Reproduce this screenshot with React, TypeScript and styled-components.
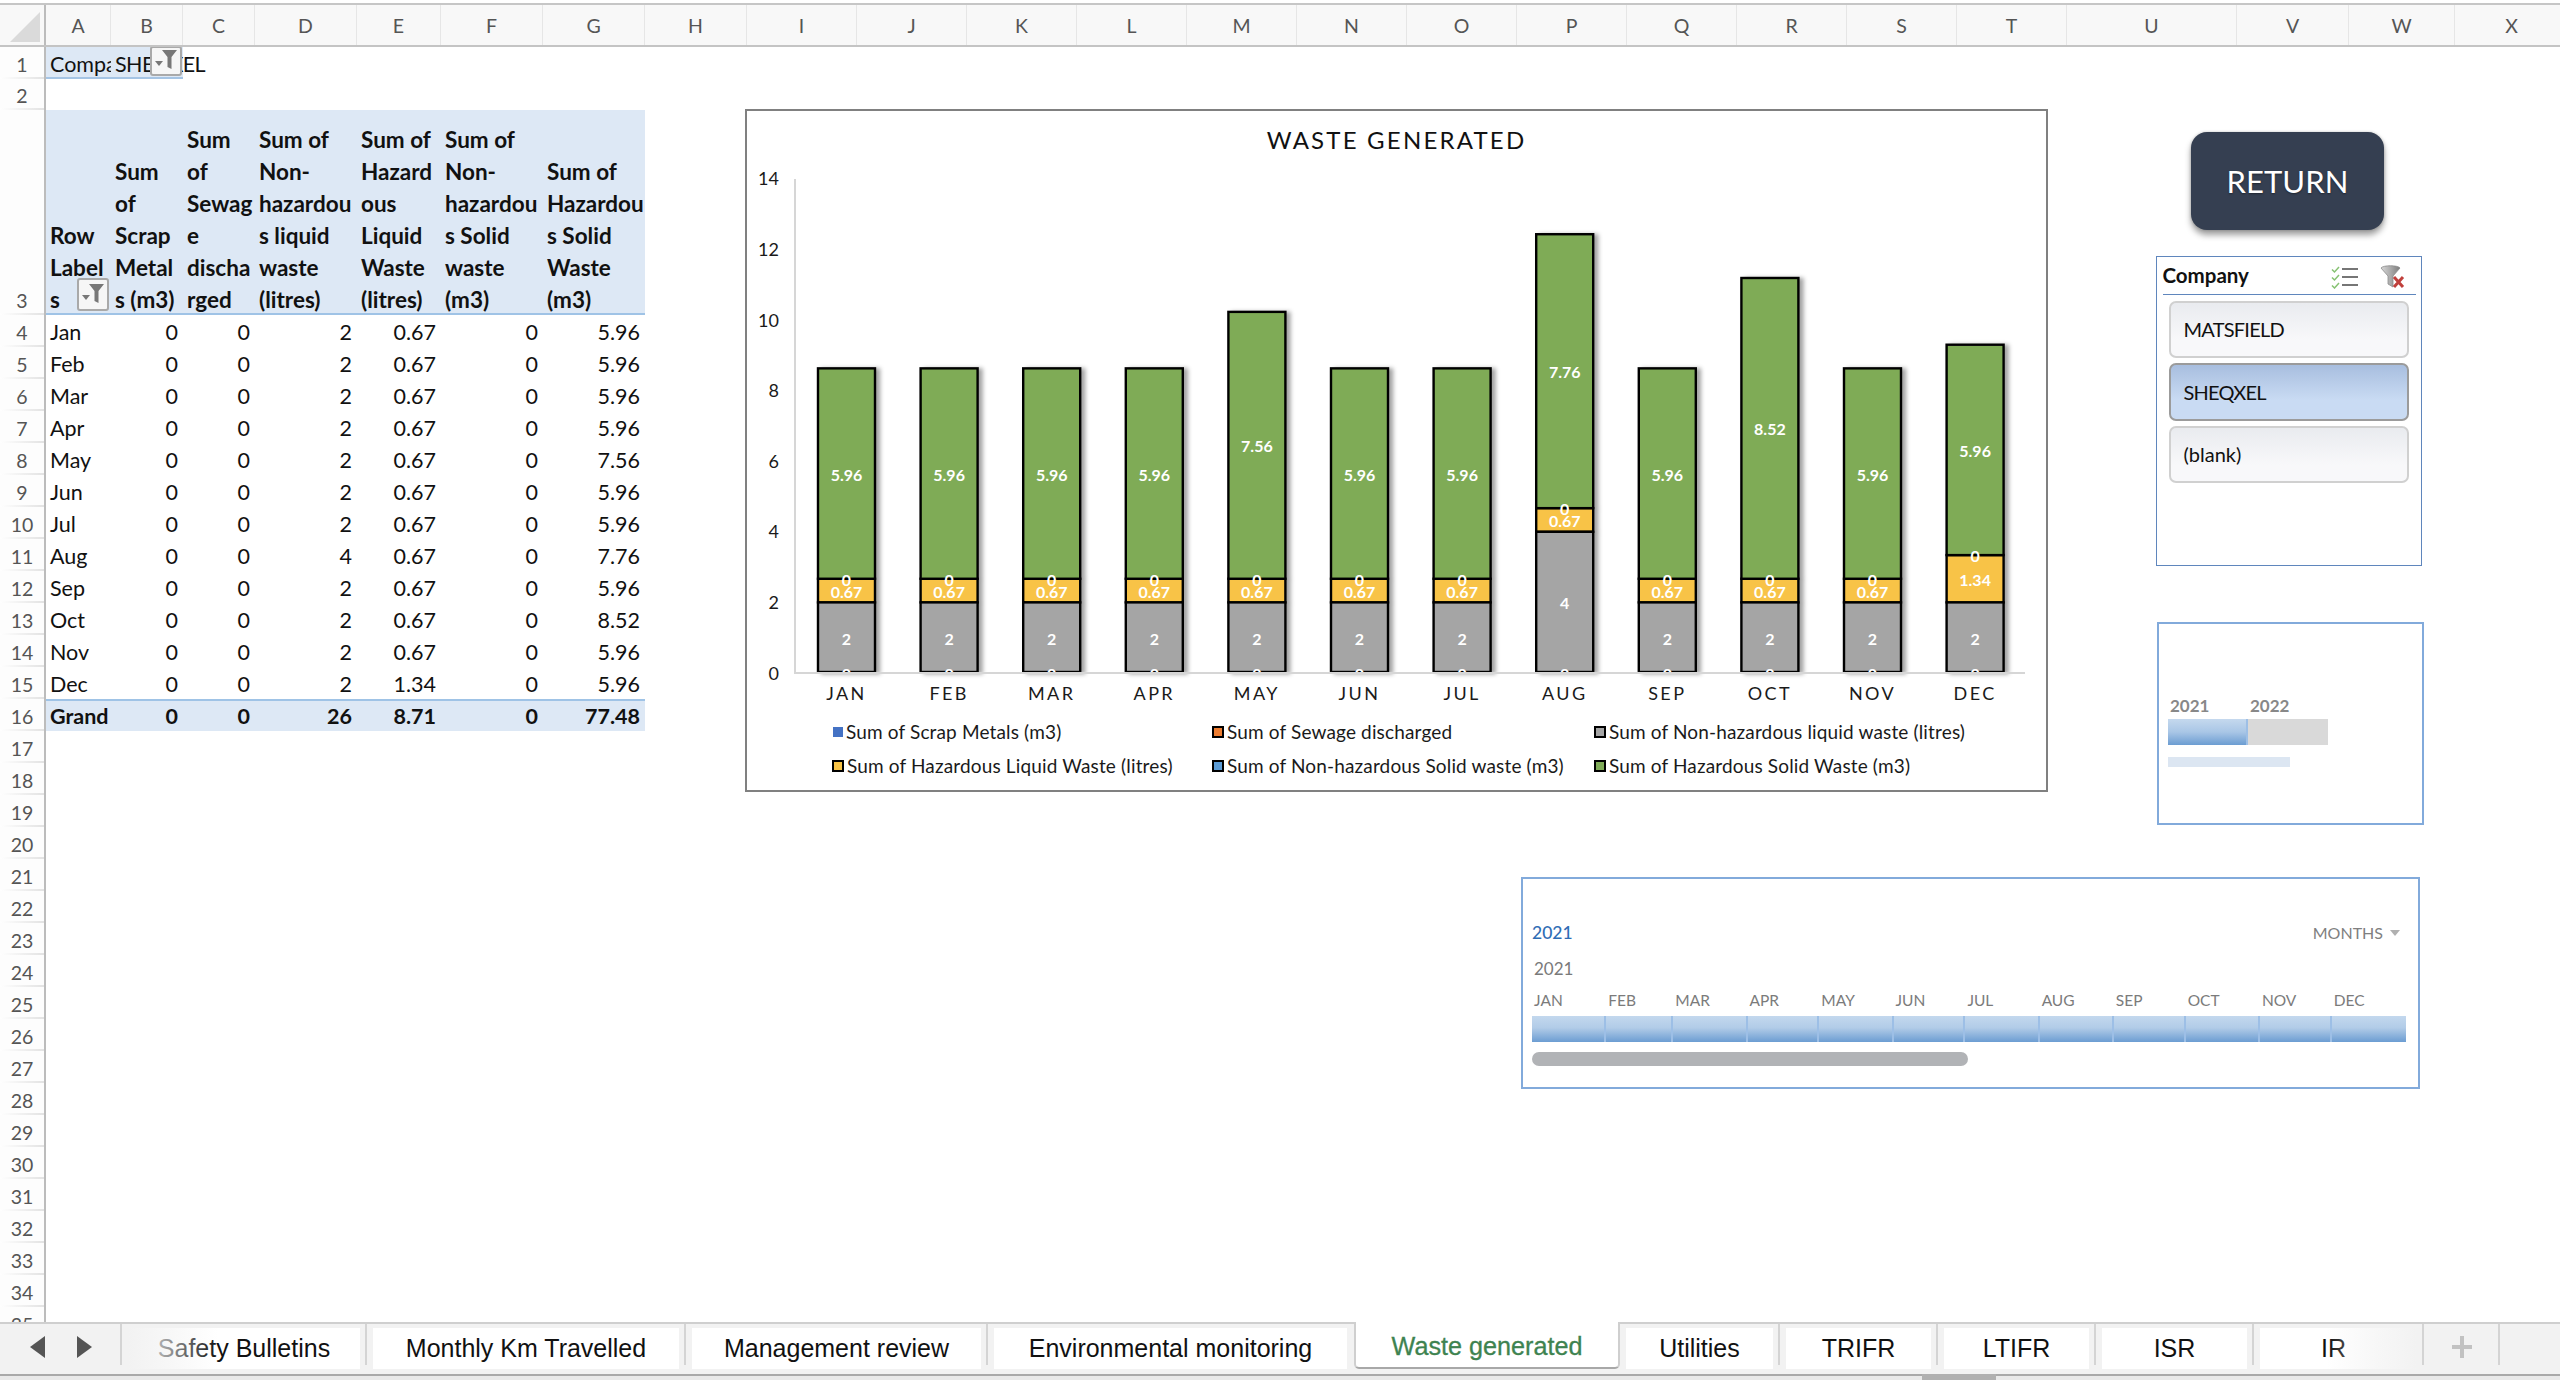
import React from "react";
import styled, { createGlobalStyle } from "styled-components";

const Global = createGlobalStyle`
  html, body { margin: 0; padding: 0; background: #fff; overflow: hidden; }
  #root { width: 2560px; height: 1380px; }
  * { box-sizing: border-box; }
`;

const BODY = `"Lato", "Open Sans", sans-serif`;
const TAB = `"Liberation Sans", Arial, sans-serif`;

const Page = styled.div`
  width: 2560px; height: 1380px; display: flex; flex-direction: column;
  font-family: ${BODY}; color: #111; overflow: hidden;
`;

/* ---------- column header ---------- */
const ColumnBar = styled.div`
  flex: none; height: 44px; margin-top: 3px; border-top: 2px solid #c6c6c6; border-bottom: 2px solid #c4c4c4;
  background: #f8f8f8; display: grid; overflow: hidden;
  grid-template-columns: 46px 65px 72px 72px 102px 84px 102px 102px 102px repeat(12, 110px) 170px 112px 106px 114px;
`;
const Corner = styled.div`
  border-right: 2px solid #bcbcbc; display: flex; align-items: flex-end; justify-content: flex-end; padding: 0 4px 3px 0;
`;
const ColName = styled.div`
  display: flex; align-items: center; justify-content: center; font-size: 19.5px; color: #555;
  border-right: 1px solid #e6e6e6;
`;

/* ---------- sheet ---------- */
const Sheet = styled.div`
  flex: 1; min-height: 0; display: flex; overflow: hidden;
`;
const RowBar = styled.div`
  flex: none; width: 46px; border-right: 2px solid #bcbcbc; background: #fdfdfd; overflow: hidden;
`;
const RowName = styled.div<{ $h: number }>`
  height: ${(p) => p.$h}px; display: flex; align-items: flex-end; justify-content: center;
  font-size: 19.5px; color: #555; padding-bottom: 0; line-height: 24px; flex: none;
  border-bottom: 2px solid; border-image: linear-gradient(90deg, #ffffff, #e2e2e2) 1;
`;
const Canvas = styled.div`
  flex: 1; display: flex; min-width: 0; align-items: flex-start;
`;

/* ---------- pivot ---------- */
const Pivot = styled.div`
  flex: none; width: 599px; display: grid;
  grid-template-columns: 65px 72px 72px 102px 84px 102px 102px;
  font-size: 21.5px; line-height: 32px;
`;
const FilterCell = styled.div<{ $clip?: boolean }>`
  grid-column: span 1; height: 32px; background: #dde8f5; border-bottom: 2px solid #a5c4e4;
  padding: 1px 0 0 4px; position: relative; white-space: nowrap; letter-spacing: ${(p) => (p.$clip ? 0 : -0.6)}px;
  overflow: ${(p) => (p.$clip ? "hidden" : "visible")}; z-index: ${(p) => (p.$clip ? 0 : 1)};
`;
const Gap = styled.div`
  grid-column: 1 / -1; height: 31px;
`;
const HeadCell = styled.div`
  height: 205px; background: #dde8f5; border-bottom: 2px solid #9fc3e6; padding: 0 0 0 4px;
  display: flex; align-items: flex-end; font-weight: 700; position: relative;
  font-size: 22.5px;
`;
const HeadText = styled.div`
  white-space: pre; margin-bottom: -3px;
`;
const NameCell = styled.div`
  height: 32px; padding: 1px 0 0 4px; white-space: nowrap; overflow: hidden;
`;
const NumCell = styled.div`
  height: 32px; padding: 1px 5px 0 0; text-align: right;
`;
const GrandName = styled(NameCell)`
  background: #dde8f5; font-weight: 700; border-top: 2px solid #9fc3e6; line-height: 30px; padding-top: 0;
`;
const GrandNum = styled(NumCell)`
  background: #dde8f5; font-weight: 700; border-top: 2px solid #9fc3e6; line-height: 30px; padding-top: 0;
`;
const FilterButton = styled.div<{ $small?: boolean }>`
  position: absolute; width: 32px; height: ${(p) => (p.$small ? 30 : 33)}px;
  right: ${(p) => (p.$small ? 1 : 2)}px; bottom: ${(p) => (p.$small ? 1 : 2)}px;
  background: #f6f6f6; border: 2px solid #a9a9a9; border-radius: 3px; display: flex; align-items: center; justify-content: center;
`;

/* ---------- right area ---------- */
const Floating = styled.div`
  flex: none; margin-left: 100px; margin-top: 62px; display: flex; flex-direction: column; align-items: flex-start;
`;
const TopRow = styled.div`
  display: flex; align-items: flex-start;
`;
const Chart = styled.div`
  flex: none; width: 1303px; height: 683px; border: 2px solid #808080; background: #fff;
  display: flex; flex-direction: column; align-items: stretch;
`;
const ChartTitle = styled.div`
  height: 49px; display: flex; align-items: center; justify-content: center; padding-top: 9px;
  font-size: 24px; font-weight: 400; letter-spacing: 2.2px; color: #111; line-height: 30px;
`;
const Plot = styled.svg`
  display: block; width: 1299px; height: 550px; flex: none;
`;
const AxisText = styled.text`
  font-family: ${BODY}; font-size: 18px; fill: #1a1a1a; text-anchor: end;
`;
const MonthText = styled.text`
  font-family: ${BODY}; font-size: 18px; fill: #1a1a1a; text-anchor: middle; letter-spacing: 2.4px;
`;
const DataText = styled.text`
  font-family: ${BODY}; font-size: 16px; font-weight: 700; fill: #fff; text-anchor: middle;
`;
const Legend = styled.div`
  display: grid; grid-template-columns: 380px 382px auto; grid-auto-rows: 34px; justify-content: start;
  padding: 0 0 0 85px; margin-top: 5px; font-size: 19px; letter-spacing: 0.15px; color: #1a1a1a;
`;
const LegendItem = styled.div`
  display: flex; align-items: center; gap: 3px; white-space: nowrap; line-height: 24px;
`;
const Swatch = styled.span<{ $c: string; $plain?: boolean }>`
  width: ${(p) => (p.$plain ? 10 : 12)}px; height: ${(p) => (p.$plain ? 10 : 12)}px; flex: none; background: ${(p) => p.$c};
  border: ${(p) => (p.$plain ? "none" : "2px solid #000")}; margin-left: ${(p) => (p.$plain ? 1 : 0)}px;
`;

const Side = styled.div`
  flex: none; width: 267px; margin-left: 108px; display: flex; flex-direction: column; align-items: flex-start;
`;
const ReturnButton = styled.div`
  width: 193px; height: 98px; margin: 23px 0 0 35px; border-radius: 16px; background: #353f51; color: #fff;
  display: flex; align-items: center; justify-content: center; font-size: 31px; letter-spacing: 0.1px;
  box-shadow: 0 5px 6px rgba(0,0,0,0.38), 0 0 3px rgba(0,0,0,0.2); text-shadow: 0 1px 2px rgba(0,0,0,0.4);
`;
const Slicer = styled.div`
  width: 266px; height: 310px; margin-top: 26px; border: 1.5px solid #5f86bd; padding: 0 5.5px; background: #fff;
`;
const SlicerHead = styled.div`
  height: 37.5px; display: flex; align-items: center; border-bottom: 1.5px solid #5f86bd; position: relative;
  font-size: 20.5px; font-weight: 700; padding-left: 0;
`;
const SlicerIcons = styled.div`
  margin-left: auto; margin-right: 10px; display: flex; gap: 22px; align-items: center; padding-top: 4px;
`;
const SlicerList = styled.div`
  margin: 6px 7px 0 6px; display: flex; flex-direction: column; gap: 5px;
`;
const SlicerItem = styled.div<{ $on?: boolean; $caps?: boolean }>`
  height: 57.5px; border-radius: 7px; padding-left: 13px; display: flex; align-items: center;
  font-size: 20px; color: #111; letter-spacing: ${(p) => (p.$caps ? -0.75 : 0)}px;
  border: 2px solid ${(p) => (p.$on ? "#9b9b9b" : "#d0d0d0")};
  background: ${(p) => p.$on ? "linear-gradient(180deg,#a8bedf 0%,#c9dbf3 65%,#c9dbf3 100%)" : "linear-gradient(180deg,#e9ebef 0%,#f8f8fa 70%,#f8f8fa 100%)"};
`;

const YearBox = styled.div`
  width: 267px; height: 203px; margin-top: 56px; margin-left: 1px; border: 2px solid #82aadb;
  padding: 70px 0 0 9px; background: #fff;
`;
const YearLabels = styled.div`
  display: grid; grid-template-columns: 80px 80px; font-size: 17px; font-weight: 700; color: #888888; line-height: 24px; height: 25px; padding-left: 2px;
`;
const YearTrack = styled.div`
  width: 160px; height: 26px; background: #d9d9d9; display: flex;
`;
const YearFill = styled.div`
  width: 80px; height: 26px; border-right: 2px solid #9dbfe6;
  background: linear-gradient(180deg,#c5d9ee 0%,#a9c6e6 50%,#6c9dd2 100%);
`;
const YearScroll = styled.div`
  width: 122px; height: 10px; background: #dce6f2; margin-top: 12px;
`;

const Timeline = styled.div`
  width: 899px; height: 212px; margin: 52px 0 0 776px; border: 2px solid #82aadb; background: #fff;
  padding: 41px 13px 0 9px; display: flex; flex-direction: column;
`;
const TimelineTop = styled.div`
  display: flex; justify-content: space-between; align-items: center; height: 24px; padding-right: 5px;
`;
const BlueYear = styled.div`
  font-size: 17.5px; color: #2f6db5; font-weight: 500;
`;
const Months = styled.div`
  font-size: 16px; color: #808080; display: flex; align-items: center; gap: 7px;
`;
const Caret = styled.span`
  width: 0; height: 0; border-left: 5px solid transparent; border-right: 5px solid transparent; border-top: 6px solid #b0b0b0; margin-top: 2px;
`;
const GrayYear = styled.div`
  font-size: 17px; color: #7a7a7a; margin-top: 13px; padding-left: 2px; line-height: 24px;
`;
const MonthGrid = styled.div`
  display: grid; width: 874px;
  grid-template-columns: 31fr 28fr 31fr 30fr 31fr 30fr 31fr 31fr 30fr 31fr 30fr 31fr;
`;
const MonthName = styled.div`
  font-size: 15.5px; color: #7b7b7b; padding-left: 2px; line-height: 22px; margin-top: 8px; height: 27px;
`;
const MonthBar = styled.div`
  height: 26px; border-right: 2px solid #9dbfe6;
  background: linear-gradient(180deg,#c3d8ee 0%,#b2cce8 45%,#6c9dd2 100%);
  &:last-child { border-right: none; }
`;
const TimelineScroll = styled.div`
  width: 436px; height: 14px; border-radius: 7px; background: #b1b3b6; margin-top: 10px;
`;

/* ---------- tabs ---------- */
const TabBar = styled.div`
  flex: none; height: 52px; background: #f2f2f2; border-top: 2px solid #cfcfcf; display: flex; align-items: stretch; position: relative; z-index: 2;
`;
const TabNav = styled.div`
  flex: none; width: 122px; display: flex; align-items: center; padding-bottom: 4px; justify-content: center; gap: 30px;
  position: relative;
`;
const NavLine = styled.span`
  position: absolute; right: 0; top: 0; height: 41px; width: 2px; background: #d4d4d4;
`;
const Slot = styled.div<{ $w: number; $line?: boolean }>`
  flex: none; width: ${(p) => p.$w}px; padding: 4px 7px 5px 6px; position: relative;
  &::after {
    content: ""; display: ${(p) => (p.$line ? "block" : "none")}; position: absolute; right: 0; top: 0; height: 41px; width: 2px; background: #d4d4d4;
  }
`;
const Tab = styled.div<{ $fade?: "left" | "right" }>`
  height: 100%; background: #fff; display: flex; align-items: center; justify-content: center;
  font-family: ${TAB}; font-size: 25px; color: #111; white-space: nowrap; position: relative;
  padding: 0 ${(p) => (p.$fade === "right" ? 10 : 0)}px 1px 0;
  &::before {
    content: ""; display: ${(p) => (p.$fade ? "block" : "none")}; position: absolute; top: 0; bottom: 0;
    width: 90px; ${(p) => (p.$fade === "left" ? "left: 0;" : "right: 0;")}
    background: linear-gradient(${(p) => (p.$fade === "left" ? "90deg" : "270deg")}, #f2f2f2 0%, rgba(242,242,242,0.6) 45%, rgba(242,242,242,0) 100%);
  }
`;
const ActiveTab = styled.div`
  flex: none; width: 266px; margin: -2px 0 5px 0; height: 47px; background: #fff; border: 2px solid #cfcfcf; border-top: none;
  border-bottom-color: #a8a8a8; border-radius: 0 0 5px 5px; display: flex; align-items: center; justify-content: center;
  font-family: ${TAB}; font-size: 25.2px; font-weight: 400; color: #3e8350; -webkit-text-stroke: 0.3px #3e8350; padding-top: 3px;
`;
const PlusSlot = styled.div`
  flex: none; width: 76px; display: flex; align-items: center; justify-content: center; padding-bottom: 5px; position: relative;
  &::after { content: ""; position: absolute; right: 0; top: 0; height: 41px; width: 2px; background: #d4d4d4; }
`;
const BottomStrip = styled.div`
  flex: none; height: 6px; background: #e9e9e9; border-top: 2px solid #a9a9a9; position: relative; z-index: 2;
`;
const StripThumb = styled.div`
  width: 74px; height: 6px; margin: -2px 0 0 1922px; background: #b0b0b0;
`;

/* ---------- data ---------- */
const COLS = "A B C D E F G H I J K L M N O P Q R S T U V W X".split(" ");
const HEADS = [
  "Row\nLabel\ns",
  "Sum\nof\nScrap\nMetal\ns (m3)",
  "Sum\nof\nSewag\ne\ndischa\nrged",
  "Sum of\nNon-\nhazardou\ns liquid\nwaste\n(litres)",
  "Sum of\nHazard\nous\nLiquid\nWaste\n(litres)",
  "Sum of\nNon-\nhazardou\ns Solid\nwaste\n(m3)",
  "Sum of\nHazardou\ns Solid\nWaste\n(m3)",
];
const MONTHS = ["Jan","Feb","Mar","Apr","May","Jun","Jul","Aug","Sep","Oct","Nov","Dec"];
const LIQUID = [2,2,2,2,2,2,2,4,2,2,2,2];
const HAZ = [0.67,0.67,0.67,0.67,0.67,0.67,0.67,0.67,0.67,0.67,0.67,1.34];
const SOLID = [5.96,5.96,5.96,5.96,7.56,5.96,5.96,7.76,5.96,8.52,5.96,5.96];

const ROW_HEIGHTS = [32, 31, 205, ...Array(32).fill(32)];

const Y0 = 673;
const UNIT = 35.3;
const y = (v: number) => Y0 - v * UNIT;
const barX = (i: number) => 818 + i * 102.6;

const LEGEND: { c: string; t: string; plain?: boolean }[] = [
  { c: "#4472c4", t: "Sum of Scrap Metals (m3)", plain: true },
  { c: "#ed7d31", t: "Sum of Sewage discharged" },
  { c: "#a5a5a5", t: "Sum of Non-hazardous liquid waste (litres)" },
  { c: "#f8c346", t: "Sum of Hazardous Liquid Waste (litres)" },
  { c: "#5b9bd5", t: "Sum of Non-hazardous Solid waste (m3)" },
  { c: "#7fab57", t: "Sum of Hazardous Solid Waste (m3)" },
];
const TABS: { n: string; w: number; line?: boolean; fade?: "left" | "right" }[] = [
  { n: "Safety Bulletins", w: 245, line: true, fade: "left" },
  { n: "Monthly Km Travelled", w: 319, line: true },
  { n: "Management review", w: 302, line: true },
  { n: "Environmental monitoring", w: 366 },
];
const TABS2: { n: string; w: number; line?: boolean; fade?: "left" | "right" }[] = [
  { n: "Utilities", w: 160, line: true },
  { n: "TRIFR", w: 158, line: true },
  { n: "LTIFR", w: 158, line: true },
  { n: "ISR", w: 158, line: true },
  { n: "IR", w: 170, line: true, fade: "right" },
];

const FunnelButtonIcon = () => (
  <svg width="28" height="26" viewBox="0 0 28 26">
    <path d="M3 13h8l-4 5z" fill="#777" />
    <path d="M10 2h15l-5.5 7v12l-4-2V9z" fill="#777" />
  </svg>
);
const ChecklistIcon = () => (
  <svg width="27" height="23" viewBox="0 0 27 23">
    <g fill="none" stroke="#86c272" strokeWidth="1.5">
      <path d="M1 3.5l2.5 2.5L8 1" />
      <path d="M1 11.5l2.5 2.5L8 9" />
      <path d="M1 19.5l2.5 2.5L8 17" />
    </g>
    <g stroke="#4a4a4a" strokeWidth="1.4">
      <path d="M11 3h16M11 11h16M11 19h16" />
    </g>
  </svg>
);
const ClearFilterIcon = () => (
  <svg width="26" height="24" viewBox="0 0 26 24">
    <defs>
      <linearGradient id="fnl" x1="0" x2="1" y1="0" y2="0">
        <stop offset="0" stopColor="#d8d8d8" />
        <stop offset="1" stopColor="#7d7d7d" />
      </linearGradient>
    </defs>
    <path d="M1 3c2-3 17-3 19 0l-7 8v11l-5-3v-8z" fill="url(#fnl)" stroke="#8a8a8a" strokeWidth="0.8" />
    <path d="M14 12l9 10M23 12l-9 10" stroke="#c0403c" strokeWidth="3" />
  </svg>
);
const NavArrow = ({ right }: { right?: boolean }) => (
  <svg width="17" height="22" viewBox="0 0 17 22">
    <path d={right ? "M1 0l15 11L1 22z" : "M16 0L1 11l15 11z"} fill="#555" />
  </svg>
);
const PlusIcon = () => (
  <svg width="20" height="22" viewBox="0 0 20 22">
    <path d="M8 0h4v9h8v4h-8v9H8v-9H0V9h8z" fill="#c2c2c2" />
  </svg>
);

export default function App() {
  return (
    <Page>
      <Global />
      <ColumnBar>
        <Corner>
          <svg width="30" height="30" viewBox="0 0 30 30"><path d="M30 0v30H0z" fill="#dadada" /></svg>
        </Corner>
        {COLS.map((c) => <ColName key={c}>{c}</ColName>)}
      </ColumnBar>
      <Sheet>
        <RowBar>
          {ROW_HEIGHTS.map((h, i) => <RowName key={i} $h={h}>{i + 1}</RowName>)}
        </RowBar>
        <Canvas>
          <Pivot>
            <FilterCell $clip>Company</FilterCell>
            <FilterCell>
              SHEQXEL
              <FilterButton $small><FunnelButtonIcon /></FilterButton>
            </FilterCell>
            <NameCell /><NameCell /><NameCell /><NameCell /><NameCell />
            <Gap />
            {HEADS.map((h, i) => (
              <HeadCell key={i}>
                <HeadText>{h}</HeadText>
                {i === 0 && <FilterButton><FunnelButtonIcon /></FilterButton>}
              </HeadCell>
            ))}
            {MONTHS.map((m, i) => (
              <React.Fragment key={m}>
                <NameCell>{m}</NameCell>
                <NumCell>0</NumCell>
                <NumCell>0</NumCell>
                <NumCell>{LIQUID[i]}</NumCell>
                <NumCell>{HAZ[i]}</NumCell>
                <NumCell>0</NumCell>
                <NumCell>{SOLID[i]}</NumCell>
              </React.Fragment>
            ))}
            <GrandName>Grand</GrandName>
            <GrandNum>0</GrandNum>
            <GrandNum>0</GrandNum>
            <GrandNum>26</GrandNum>
            <GrandNum>8.71</GrandNum>
            <GrandNum>0</GrandNum>
            <GrandNum>77.48</GrandNum>
          </Pivot>
          <Floating>
            <TopRow>
              <Chart>
                <ChartTitle>WASTE GENERATED</ChartTitle>
                <Plot viewBox="747 160 1299 550">
                  <defs>
                    <filter id="barShadow" x="-20%" y="-5%" width="150%" height="110%">
                      <feDropShadow dx="4" dy="1" stdDeviation="2.2" floodColor="#000" floodOpacity="0.36" />
                    </filter>
                    <clipPath id="plotClip"><rect x="747" y="160" width="1299" height="512" /></clipPath>
                  </defs>
                  <path d="M795 179V673H2025" fill="none" stroke="#d6d6d6" strokeWidth="2" />
                  {[0,2,4,6,8,10,12,14].map((v) => (
                    <AxisText key={v} x={779} y={y(v) + 6.5}>{v}</AxisText>
                  ))}
                  {MONTHS.map((m, i) => {
                    const x = barX(i);
                    const a = LIQUID[i], b = a + HAZ[i], c = b + SOLID[i];
                    return (
                      <g key={m} filter="url(#barShadow)">
                        <rect x={x} y={y(b)} width={57} height={y(a) - y(b)} fill="#f8c346" stroke="#000" strokeWidth="2.4" />
                        <rect x={x} y={y(a)} width={57} height={y(0) - y(a) - 1} fill="#a5a5a5" stroke="#000" strokeWidth="2.4" />
                        <rect x={x} y={y(c)} width={57} height={y(b) - y(c)} fill="#7fab57" stroke="#000" strokeWidth="2.4" />
                      </g>
                    );
                  })}
                  <path d="M795 673H2025" fill="none" stroke="#d6d6d6" strokeWidth="2" />
                  {MONTHS.map((m, i) => {
                    const x = barX(i) + 28.5;
                    const a = LIQUID[i], b = a + HAZ[i], c = b + SOLID[i];
                    return (
                      <g key={m}>
                        <DataText x={x} y={y(a / 2) + 7}>{a}</DataText>
                        <DataText x={x} y={y(a + HAZ[i] / 2) + 7}>{HAZ[i]}</DataText>
                        <DataText x={x} y={y((b + c) / 2) + 7}>{SOLID[i]}</DataText>
                        <DataText x={x} y={y(b) + 7}>0</DataText>
                        <g clipPath="url(#plotClip)"><DataText x={x} y={680}>0</DataText></g>
                        <MonthText x={x} y={700}>{m.toUpperCase()}</MonthText>
                      </g>
                    );
                  })}
                </Plot>
                <Legend>
                  {LEGEND.map((l) => (
                    <LegendItem key={l.t}>
                      <Swatch $c={l.c} $plain={l.plain} />
                      {l.t}
                    </LegendItem>
                  ))}
                </Legend>
              </Chart>
              <Side>
                <ReturnButton>RETURN</ReturnButton>
                <Slicer>
                  <SlicerHead>
                    Company
                    <SlicerIcons>
                      <ChecklistIcon />
                      <ClearFilterIcon />
                    </SlicerIcons>
                  </SlicerHead>
                  <SlicerList>
                    <SlicerItem $caps>MATSFIELD</SlicerItem>
                    <SlicerItem $on $caps>SHEQXEL</SlicerItem>
                    <SlicerItem>(blank)</SlicerItem>
                  </SlicerList>
                </Slicer>
                <YearBox>
                  <YearLabels><span>2021</span><span>2022</span></YearLabels>
                  <YearTrack><YearFill /></YearTrack>
                  <YearScroll />
                </YearBox>
              </Side>
            </TopRow>
            <Timeline>
              <TimelineTop>
                <BlueYear>2021</BlueYear>
                <Months>MONTHS <Caret /></Months>
              </TimelineTop>
              <GrayYear>2021</GrayYear>
              <MonthGrid>
                {MONTHS.map((m) => <MonthName key={m}>{m.toUpperCase()}</MonthName>)}
                {MONTHS.map((m) => <MonthBar key={m} />)}
              </MonthGrid>
              <TimelineScroll />
            </Timeline>
          </Floating>
        </Canvas>
      </Sheet>
      <TabBar>
        <TabNav>
          <NavArrow />
          <NavArrow right />
          <NavLine />
        </TabNav>
        {TABS.map((t) => (
          <Slot key={t.n} $w={t.w} $line={t.line}><Tab $fade={t.fade}>{t.n}</Tab></Slot>
        ))}
        <ActiveTab>Waste generated</ActiveTab>
        {TABS2.map((t) => (
          <Slot key={t.n} $w={t.w} $line={t.line}><Tab $fade={t.fade}>{t.n}</Tab></Slot>
        ))}
        <PlusSlot><PlusIcon /></PlusSlot>
      </TabBar>
      <BottomStrip><StripThumb /></BottomStrip>
    </Page>
  );
}
